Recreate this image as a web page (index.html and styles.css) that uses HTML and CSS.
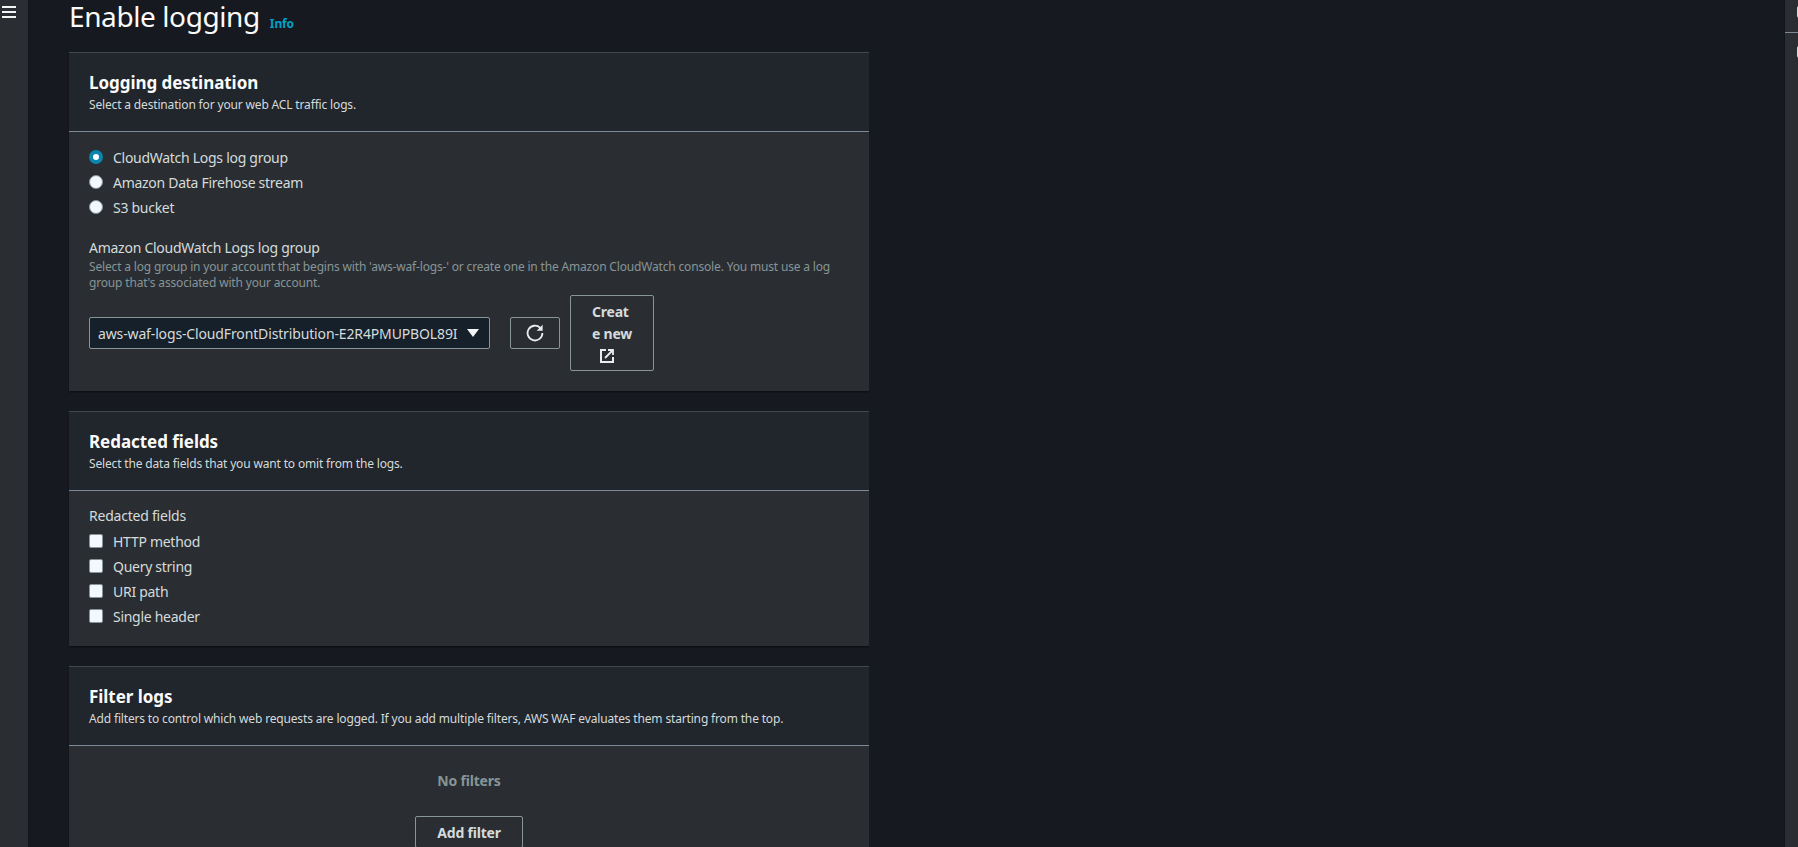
FILE: index.html
```html
<!DOCTYPE html>
<html lang="en">
<head>
<meta charset="utf-8">
<title>Enable logging</title>
<link rel="stylesheet" href="styles.css">
</head>
<body>
<div class="app">
  <aside class="nav">
    <button class="burger" aria-label="Open navigation">
      <svg width="14" height="12" viewBox="0 0 14 12"><path d="M0 1h14M0 6h14M0 11h14" stroke="#f2f4f5" stroke-width="1.9" fill="none"/></svg>
    </button>
  </aside>
  <main class="main">
    <header class="title-row">
      <h1>Enable logging</h1>
      <a class="info">Info</a>
    </header>
    <section class="card">
      <div class="card-head">
        <h2>Logging destination</h2>
        <p>Select a destination for your web ACL traffic logs.</p>
      </div>
      <div class="card-body dest-body">
        <div class="options">
          <label class="opt"><span class="radio on"></span>CloudWatch Logs log group</label>
          <label class="opt"><span class="radio"></span>Amazon Data Firehose stream</label>
          <label class="opt"><span class="radio"></span>S3 bucket</label>
        </div>
        <div class="field-label">Amazon CloudWatch Logs log group</div>
        <div class="field-desc">Select a log group in your account that begins with 'aws-waf-logs-' or create one in the Amazon CloudWatch console. You must use a log group that's associated with your account.</div>
        <div class="picker">
          <div class="select">
            <span class="select-text">aws-waf-logs-CloudFrontDistribution-E2R4PMUPBOL89I</span>
            <svg class="caret" width="12" height="8" viewBox="0 0 12 8"><path d="M0 0h12L6 8z" fill="#f2f4f5"/></svg>
          </div>
          <button class="btn refresh" aria-label="Refresh">
            <svg width="18" height="18" viewBox="0 0 18 18"><path d="M14.2 3.8A7.4 7.4 0 1 0 16.4 9" stroke="#eaeded" stroke-width="1.8" fill="none"/><path d="M16.6 0.8v6h-6z" fill="#eaeded"/></svg>
          </button>
          <button class="btn create">
            <span class="create-text">Creat<br>e new</span>
            <svg width="14" height="14" viewBox="0 0 14 14"><path d="M6 1H1v12h12V8" stroke="#eaeded" stroke-width="2" fill="none"/><path d="M5 9l7-7M8 1h5v5" stroke="#eaeded" stroke-width="1.8" fill="none"/></svg>
          </button>
        </div>
      </div>
    </section>
    <section class="card">
      <div class="card-head">
        <h2>Redacted fields</h2>
        <p>Select the data fields that you want to omit from the logs.</p>
      </div>
      <div class="card-body red-body">
        <div class="group-label">Redacted fields</div>
        <div class="options">
          <label class="opt"><span class="check"></span>HTTP method</label>
          <label class="opt"><span class="check"></span>Query string</label>
          <label class="opt"><span class="check"></span>URI path</label>
          <label class="opt"><span class="check"></span>Single header</label>
        </div>
      </div>
    </section>
    <section class="card">
      <div class="card-head">
        <h2>Filter logs</h2>
        <p>Add filters to control which web requests are logged. If you add multiple filters, AWS WAF evaluates them starting from the top.</p>
      </div>
      <div class="card-body filter-body">
        <div class="empty">No filters</div>
        <button class="btn add">Add filter</button>
      </div>
    </section>
  </main>
  <aside class="tools">
    <div class="tool-top"><span class="tool-glyph"></span></div>
    <div class="tool-bottom"><span class="tool-glyph"></span></div>
  </aside>
</div>
</body>
</html>
```
FILE: styles.css
```css
* { box-sizing: border-box; }
html, body { margin: 0; height: 100%; overflow: hidden; }
body { background: #16191f; color: #d5dbdb; font-family: "Noto Sans", "Open Sans", sans-serif; font-size: 14px; }
.app { display: grid; grid-template-columns: 29px 1fr 14px; height: 847px; overflow: hidden; }
.nav { background: #2a2e33; border-right: 1px solid #12151a; }
.burger { display: block; margin: 6px 0 0 2px; padding: 0; background: none; border: 0; height: 12px; line-height: 0; }
.main { padding: 0 0 0 40px; overflow: hidden; width: 840px; }
.title-row { display: flex; align-items: flex-end; height: 52px; padding-bottom: 20px; gap: 10px; }
h1 { margin: 0; font-size: 28px; font-weight: 400; line-height: 32px; color: #fafafa; letter-spacing: -0.4px; }
.info { color: #00a1c9; font-size: 12px; font-weight: 700; line-height: 18px; margin-bottom: -1px; letter-spacing: -0.15px; }
.card { background: #2a2e33; border-top: 1px solid #414750; box-shadow: 0 1px 1px 0 #0e1014, 1px 1px 1px 0 #0e1014; margin-bottom: 20px; }
.card-head { background: #21252c; height: 79px; padding: 19px 20px 0; border-bottom: 1px solid #7d8998; }
h2 { margin: 0; font-size: 17px; font-weight: 700; line-height: 22px; color: #fafafa; letter-spacing: -0.05px; }
.card-head p { margin: 3px 0 0; font-size: 12px; line-height: 16px; color: #d5dbdb; letter-spacing: -0.16px; }
.card-body { padding: 0 20px; }
.dest-body { height: 259px; padding-top: 15px; }
.options { display: flex; flex-direction: column; gap: 5px; }
.opt { display: flex; align-items: center; gap: 10px; height: 20px; font-size: 14px; color: #d5dbdb; letter-spacing: -0.28px; }
.radio { width: 14px; height: 14px; border-radius: 50%; background: #f2f8fd; border: 1px solid #879596; flex: none; }
.radio.on { background: #fff; border: 4px solid #0a85ad; }
.check { width: 14px; height: 14px; background: #f2f8fd; border: 1px solid #879596; border-radius: 2px; flex: none; }
.field-label { margin-top: 21px; font-size: 14px; line-height: 20px; color: #d5dbdb; letter-spacing: -0.26px; }
.field-desc { margin-top: 1px; font-size: 12px; line-height: 16px; color: #879596; letter-spacing: -0.17px; }
.picker { display: flex; align-items: center; gap: 20px; margin-top: 4px; }
.select { width: 401px; height: 32px; background: #16202b; border: 1px solid #879596; border-radius: 2px; display: flex; align-items: center; padding: 0 8px; justify-content: space-between; color: #d5dbdb; font-size: 14px; letter-spacing: -0.14px; }
.select-text { white-space: nowrap; width: 362px; }
.caret { margin-right: 2px; }
.btn { background: none; border: 1px solid #879596; border-radius: 2px; color: #d5dbdb; font-family: inherit; font-size: 14px; font-weight: 700; letter-spacing: -0.2px; }
.refresh { width: 50px; height: 32px; padding: 0; display: flex; align-items: center; justify-content: center; }
.create { width: 84px; height: 76px; margin-left: -10px; padding: 0; display: flex; flex-direction: column; align-items: center; }
.create-text { line-height: 22px; margin-top: 5px; display: block; text-align: left; }
.create svg { margin: 4px 10px 0 0; }
.red-body { height: 155px; padding-top: 15px; }
.group-label { font-size: 14px; line-height: 20px; color: #d5dbdb; margin-bottom: 5px; letter-spacing: -0.22px; }
.filter-body { display: flex; flex-direction: column; align-items: center; padding-top: 25px; }
.empty { font-size: 14px; font-weight: 700; line-height: 20px; color: #879596; letter-spacing: -0.2px; }
.add { margin-top: 25px; width: 108px; height: 32px; padding: 0; }
.tools { background: #2a2e33; border-left: 1px solid #12151a; }
.tool-top { height: 33px; border-bottom: 1px solid #7d8998; padding: 6px 0 0 12px; }
.tool-bottom { padding: 13px 0 0 12px; }
.tool-glyph { display: block; width: 5px; height: 12px; border-radius: 3px; background: #d5dbdb; }
```
